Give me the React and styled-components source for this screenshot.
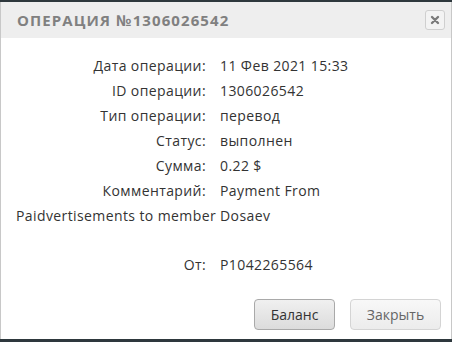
import React from 'react';
import styled, { createGlobalStyle } from 'styled-components';

const GlobalStyle = createGlobalStyle`
  html, body {
    margin: 0;
    padding: 0;
    background: #2e383d;
  }
`;

const Dialog = styled.div`
  margin-top: 2px;
  width: 452px;
  height: 337px;
  box-sizing: border-box;
  background: #fff;
  border-left: 1px solid #c8c8c8;
  border-right: 1px solid #c8c8c8;
  display: flex;
  flex-direction: column;
  font-family: "Open Sans", sans-serif;
`;

const TitleBar = styled.div`
  height: 36px;
  background: #eeeeee;
  display: flex;
  align-items: center;
  justify-content: space-between;
  padding: 0 6px 0 16px;
`;

const Title = styled.div`
  font-size: 15px;
  font-weight: 700;
  letter-spacing: 1.1px;
  color: #808080;
`;

const CloseBtn = styled.button`
  width: 20px;
  height: 20px;
  padding: 0;
  border: 1px solid #cfcfcf;
  border-radius: 3px;
  background: #f3f3f3;
  display: flex;
  align-items: center;
  justify-content: center;
`;

const Body = styled.div`
  flex: 1;
  padding: 15px 15px 0 15px;
  color: #333;
  font-size: 14px;
  letter-spacing: 0.4px;
`;

const Row = styled.div`
  display: grid;
  grid-template-columns: 190px 1fr;
  column-gap: 14px;
  height: 25px;
  align-items: center;
`;

const Label = styled.div`
  text-align: right;
`;

const Wrapped = styled.div`
  height: 25px;
  display: flex;
  align-items: center;
`;

const Spacer = styled.div`
  height: 24px;
`;

const Footer = styled.div`
  display: flex;
  justify-content: flex-end;
  gap: 15px;
  padding: 0 10px 9px 0;
`;

const Button = styled.button`
  height: 31px;
  padding: 0;
  width: ${p => p.$w}px;
  font-family: "Open Sans", sans-serif;
  font-size: 14px;
  border-radius: 4px;
  color: ${p => (p.$muted ? '#666' : '#333')};
  border: 1px solid ${p => (p.$muted ? '#d4d4d4' : '#a9a9a9')};
  background: ${p =>
    p.$muted
      ? 'linear-gradient(#f8f8f8, #ececec)'
      : 'linear-gradient(#f0f0f0, #dcdcdc)'};
`;

const rows = [
  ['Дата операции:', '11 Фев 2021 15:33'],
  ['ID операции:', '1306026542'],
  ['Тип операции:', 'перевод'],
  ['Статус:', 'выполнен'],
  ['Сумма:', '0.22 $'],
  ['Комментарий:', 'Payment From'],
];

export default function App() {
  return (
    <>
      <GlobalStyle />
      <Dialog>
        <TitleBar>
          <Title>ОПЕРАЦИЯ №1306026542</Title>
          <CloseBtn>
            <svg width="10" height="10" viewBox="0 0 10 10">
              <path d="M2 2 L8 8 M8 2 L2 8" stroke="#7a7a7a" strokeWidth="2.4" strokeLinecap="round" />
            </svg>
          </CloseBtn>
        </TitleBar>
        <Body>
          {rows.map(([l, v]) => (
            <Row key={l}>
              <Label>{l}</Label>
              <div>{v}</div>
            </Row>
          ))}
          <Wrapped>Paidvertisements to member Dosaev</Wrapped>
          <Spacer />
          <Row>
            <Label>От:</Label>
            <div>P1042265564</div>
          </Row>
        </Body>
        <Footer>
          <Button $w={81}>Баланс</Button>
          <Button $w={91} $muted>Закрыть</Button>
        </Footer>
      </Dialog>
    </>
  );
}
